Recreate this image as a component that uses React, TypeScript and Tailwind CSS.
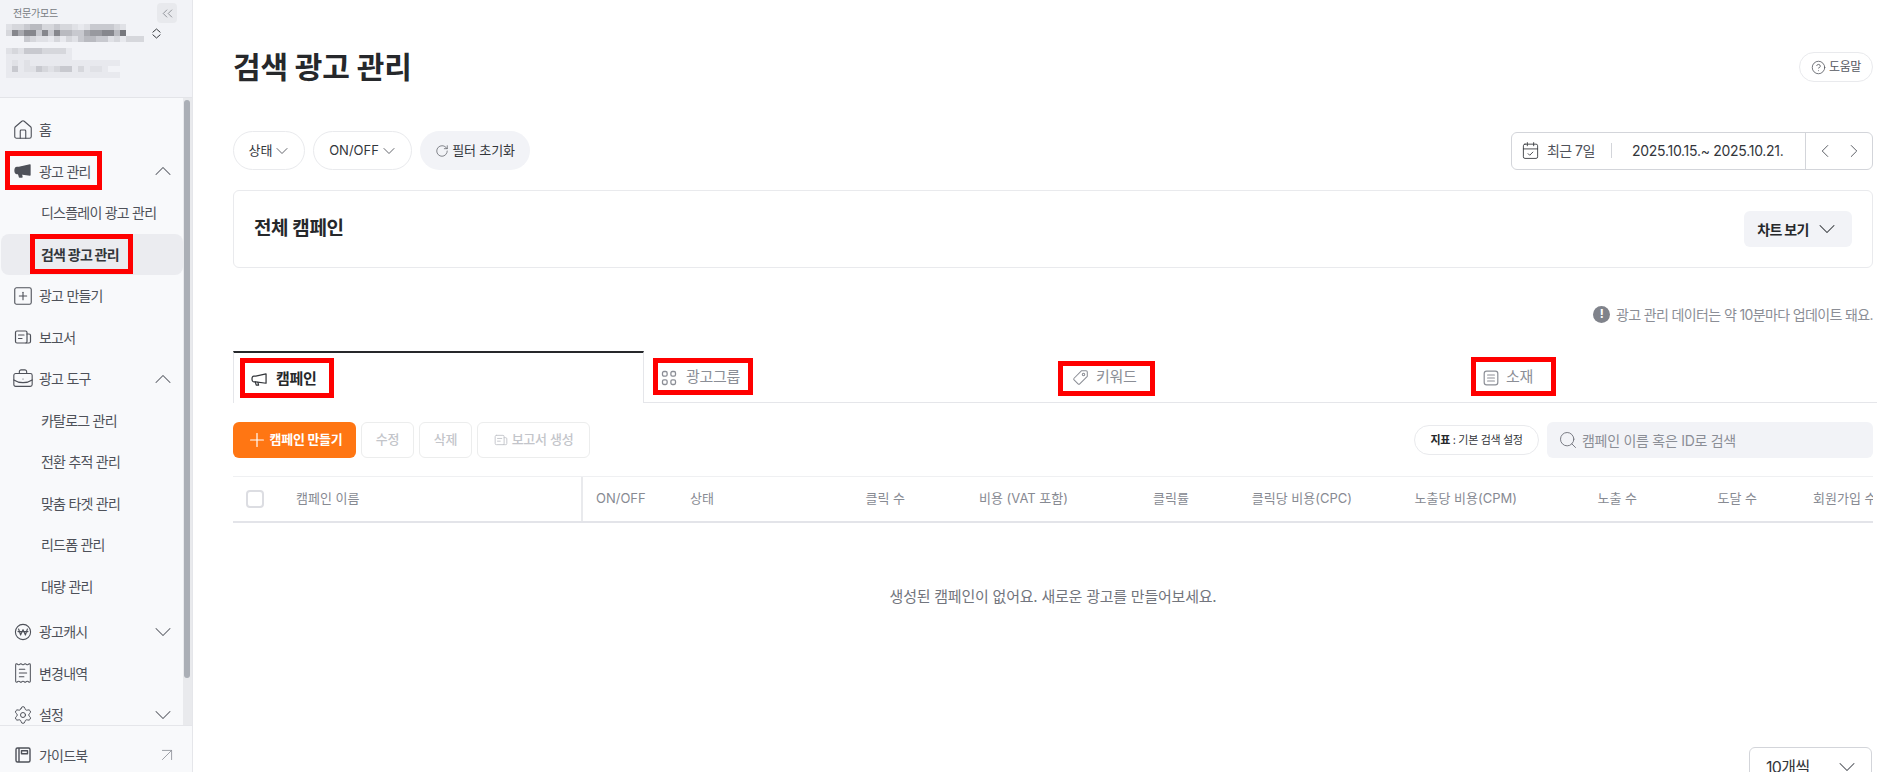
import React from "react";
import {
  House, SquarePlus, BriefcaseBusiness, ChevronUp, ChevronDown, ChevronLeft, ChevronRight, ChevronsLeft,
  ReceiptText, Settings, ArrowUpRight, RotateCw, CalendarCheck, CircleHelp, Search, Plus,
} from "lucide-react";

const FONT = "font-['Inter','Noto_Sans_CJK_KR',sans-serif]";

const Mega = ({ filled = false, className = "" }: { filled?: boolean; className?: string }) => (
  <svg viewBox="0 0 18 16" className={className} fill={filled ? "currentColor" : "none"} stroke="currentColor" strokeWidth="1.3" strokeLinejoin="round" strokeLinecap="round">
    <path d="M16 2 L16 12 L5 10.5 L3 10.5 C1.6 10.5 1 9.2 1 7.5 C1 5.8 1.6 4.3 3 4.3 L5 4.3 Z" />
    <path d="M4.5 10.5 L5.5 14 L8 14 L7.3 11" />
  </svg>
);

const Report = ({ className = "" }: { className?: string }) => (
  <svg viewBox="0 0 18 18" className={className} fill="none" stroke="currentColor" strokeWidth="1.2" strokeLinecap="round" strokeLinejoin="round">
    <rect x="1.5" y="3" width="11.5" height="12" rx="1.5" />
    <path d="M13 6 H15 a1.5 1.5 0 0 1 1.5 1.5 V13.5 a1.5 1.5 0 0 1 -1.5 1.5 H12" />
    <path d="M4.5 7 H10 M4.5 10.5 H8" />
  </svg>
);

const WonCircle = ({ className = "" }: { className?: string }) => (
  <svg viewBox="0 0 18 18" className={className} fill="none" stroke="currentColor" strokeLinecap="round" strokeLinejoin="round">
    <circle cx="9" cy="9" r="7.6" strokeWidth="1.1" />
    <path d="M4.6 6 L6.6 12 L9 6.6 L11.4 12 L13.4 6 M4 8.6 H14" strokeWidth="1.1" />
  </svg>
);

const Book = ({ className = "" }: { className?: string }) => (
  <svg viewBox="0 0 18 18" className={className} fill="none" stroke="currentColor" strokeWidth="1.4" strokeLinejoin="round">
    <rect x="2" y="2" width="14" height="14" rx="1.5" />
    <path d="M5 2 V16" />
    <rect x="7.5" y="4.8" width="6" height="3" />
  </svg>
);

const Grid4 = ({ className = "" }: { className?: string }) => (
  <svg viewBox="0 0 16 16" className={className} fill="none" stroke="currentColor" strokeWidth="1.3">
    <rect x="1.5" y="1.5" width="4.6" height="4.6" rx="1.4" />
    <rect x="9.9" y="1.5" width="4.6" height="4.6" rx="1.4" />
    <rect x="1.5" y="9.9" width="4.6" height="4.6" rx="1.4" />
    <rect x="9.9" y="9.9" width="4.6" height="4.6" rx="1.4" />
  </svg>
);

const DocLines = ({ className = "" }: { className?: string }) => (
  <svg viewBox="0 0 16 16" className={className} fill="none" stroke="currentColor" strokeWidth="1.2" strokeLinecap="round">
    <rect x="1.2" y="1.2" width="13.6" height="13.6" rx="2.4" />
    <path d="M4.6 5 H11.4 M4.6 8 H11.4 M4.6 11 H11.4" />
  </svg>
);

const DiagTag = ({ className = "" }: { className?: string }) => (
  <svg viewBox="0 0 18 18" className={className} fill="none" stroke="currentColor" strokeWidth="1.1" strokeLinejoin="round">
    <path d="M10.2 1.8 L14.8 1.8 Q16.2 1.8 16.2 3.2 L16.2 7.8 L8.2 15.8 Q7.3 16.7 6.4 15.8 L2.2 11.6 Q1.3 10.7 2.2 9.8 Z" />
    <circle cx="12.2" cy="5.8" r="1.3" />
  </svg>
);

const UpDown = ({ className = "" }: { className?: string }) => (
  <svg viewBox="0 0 10 12" className={className} fill="none" stroke="currentColor" strokeWidth="1.1" strokeLinecap="round" strokeLinejoin="round">
    <path d="M1 4.5 L5 1 L9 4.5 M1 7.5 L5 11 L9 7.5" />
  </svg>
);

/* The blurred account details: a mosaic of 6px blocks, one hex digit per block (0 = none). */
const MOSAIC: [number, string][] = [
  [0, "23345533433212444432"],
  [1, "38688484855446778859"],
  [2, "00043221313245544231333"],
  [4, "23244433331"],
  [5, "11111111111"],
  [6, "1212111111111111111"],
  [7, "14122432344131221"],
  [8, "1111111111111111111"],
];
const GRAY: Record<string, string> = {
  "1": "#e8e9ee", "2": "#e0e1e6", "3": "#d6d7dc", "4": "#c8c9cf", "5": "#b9bac0",
  "6": "#a8a9af", "7": "#98999f", "8": "#86878d", "9": "#77787e",
};
const Mosaic = () => (
  <svg width="138" height="54" viewBox="0 0 138 54" className="block">
    {MOSAIC.map(([r, s]) =>
      s.split("").map((c, i) =>
        GRAY[c] ? <rect key={`${r}-${i}`} x={i * 6} y={r * 6} width="6" height="6" fill={GRAY[c]} /> : null
      )
    )}
  </svg>
);

type NavItem = { label: string; icon?: React.ReactNode; chev?: "up" | "down"; sub?: boolean; active?: boolean };

const ic = "w-[18px] h-[18px] shrink-0";
const lu = "w-[22px] h-[22px] -mx-[2px] shrink-0";
const NAV: NavItem[] = [
  { label: "홈", icon: <House className={lu} strokeWidth={1.2} /> },
  { label: "광고 관리", icon: <Mega filled className={ic} />, chev: "up" },
  { label: "디스플레이 광고 관리", sub: true },
  { label: "검색 광고 관리", sub: true, active: true },
  { label: "광고 만들기", icon: <SquarePlus className={lu} strokeWidth={1.2} /> },
  { label: "보고서", icon: <Report className={ic} /> },
  { label: "광고 도구", icon: <BriefcaseBusiness className={lu} strokeWidth={1.2} />, chev: "up" },
  { label: "카탈로그 관리", sub: true },
  { label: "전환 추적 관리", sub: true },
  { label: "맞춤 타겟 관리", sub: true },
  { label: "리드폼 관리", sub: true },
  { label: "대량 관리", sub: true },
];
const NAV2: NavItem[] = [
  { label: "광고캐시", icon: <WonCircle className={ic} />, chev: "down" },
  { label: "변경내역", icon: <ReceiptText className={lu} strokeWidth={1.1} /> },
  { label: "설정", icon: <Settings className="w-[20px] h-[20px] -mx-px shrink-0" strokeWidth={1.2} />, chev: "down" },
];

const Row = ({ item }: { item: NavItem }) => (
  <div
    className={`flex items-center h-[41.5px] shrink-0 rounded-lg tracking-[-0.055em] text-[14px] ${
      item.active ? "bg-[#ebecf0] font-bold text-[#33363b] ml-px" : "text-[#4e5159]"
    } ${item.sub ? (item.active ? "pl-[40px]" : "pl-[41px]") : "pl-[14px]"}`}
  >
    {item.icon}
    {!item.sub && <span className="w-[7px]" />}
    <span className="flex-1 whitespace-nowrap">{item.label}</span>
    {item.chev === "up" && <ChevronUp className="w-[28px] h-[28px] mr-[6px] text-[#5b5e66]" strokeWidth={0.9} />}
    {item.chev === "down" && <ChevronDown className="w-[28px] h-[28px] mr-[6px] text-[#5b5e66]" strokeWidth={0.9} />}
  </div>
);

const Sidebar = () => (
  <aside className="w-[193px] shrink-0 h-full flex flex-col border-r border-[#e5e6ea] bg-[#f8f9fb]">
    <div className="h-[98px] shrink-0 bg-[#f2f3f7] border-b border-[#e3e4e8] flex">
      <div className="w-[151px] shrink-0 pl-[6px] pt-[7px]">
        <div className="pl-[7px] text-[10px] leading-[12px] text-[#777a82] tracking-[-0.02em]">전문가모드</div>
        <div className="mt-[5px]">
          <Mosaic />
        </div>
      </div>
      <div className="flex flex-col pt-[3px]">
        <div className="ml-[6px] w-[20px] h-[20px] rounded bg-[#e8e9ed] flex items-center justify-center text-[#6e7179]">
          <ChevronsLeft className="w-[17px] h-[17px]" strokeWidth={1} />
        </div>
        <UpDown className="ml-px w-[9px] h-[11px] mt-[5px] text-[#33363b]" />
      </div>
    </div>
    <div className="flex-1 flex min-h-0">
      <div className="w-[183px] pt-[11px] h-[627px] overflow-hidden flex flex-col">
        {NAV.map((n) => <Row key={n.label} item={n} />)}
        <div className="h-[4px] shrink-0" />
        {NAV2.map((n) => <Row key={n.label} item={n} />)}
      </div>
      <div className="w-[9px] h-[627px] bg-[#e9eaed] pt-[2px] pl-px pr-[2px]">
        <div className="h-[578px] rounded-full bg-[#abafb6]" />
      </div>
    </div>
    <div className="h-[47px] shrink-0 border-t border-[#e5e6ea] flex items-center pt-[12px] pl-[14px] pr-[14px] text-[14px] tracking-[-0.055em] text-[#4e5159]">
      <Book className={ic} />
      <span className="ml-[7px] flex-1">가이드북</span>
      <ArrowUpRight className="w-[22px] h-[22px] text-[#8b8e96]" strokeWidth={0.9} />
    </div>
  </aside>
);

const Pill = ({ children, className = "" }: { children: React.ReactNode; className?: string }) => (
  <div className={`h-[39px] rounded-full flex items-center justify-center text-[13px] text-[#33363b] ${className}`}>{children}</div>
);

const Tab = ({ icon, label, active = false, gap = "gap-[7px]" }: { icon: React.ReactNode; label: string; active?: boolean; gap?: string }) => (
  <div
    className={`w-[411px] h-[52px] shrink-0 flex items-center ${gap} pl-[17px] ${
      active
        ? "border-t-2 border-t-[#26282b] border-l border-r border-[#e5e6ea] font-bold text-[#26282b] pt-[2px]"
        : "border-b border-[#e5e6ea] text-[#8b8e96] pt-[2px]"
    } text-[15px] tracking-[-0.02em]`}
  >
    {icon}
    <span>{label}</span>
  </div>
);

const Ghost = ({ children, w }: { children: React.ReactNode; w: string }) => (
  <div className={`${w} h-[36px] rounded-md border border-[#eceded] flex items-center justify-center gap-[4px] text-[13px] font-medium text-[#c3c5ca] tracking-[-0.02em]`}>{children}</div>
);

const Th = ({ w, children, left = false }: { w: string; children: React.ReactNode; left?: boolean }) => (
  <div className={`${w} shrink-0 whitespace-nowrap ${left ? "text-left" : "text-right"}`}>{children}</div>
);

const Main = () => (
  <main className="flex-1 min-w-0 h-full pl-[40px] pr-[8px] pt-[52px] flex flex-col bg-white [&>*]:shrink-0">
    <div className="h-[30px] flex items-center justify-between">
      <h1 className="text-[30px] font-bold text-[#26282b] tracking-[-0.005em] leading-[30px]">검색 광고 관리</h1>
      <div className="w-[74px] h-[30px] rounded-full border border-[#e9eaed] flex items-center justify-center gap-[3px] text-[12px] text-[#55585f]">
        <CircleHelp className="w-[15px] h-[15px]" strokeWidth={1.3} />
        <span className="tracking-[-0.03em]">도움말</span>
      </div>
    </div>

    <div className="mt-[49px] h-[39px] flex items-center justify-between">
      <div className="flex gap-[8px]">
        <Pill className="w-[72px] border border-[#e9eaed] pl-[3px]">
          <span>상태</span>
          <ChevronDown className="w-[20px] h-[20px] text-[#55585f]" strokeWidth={1.1} />
        </Pill>
        <Pill className="w-[99px] border border-[#e9eaed] pl-[3px]">
          <span>ON/OFF</span>
          <ChevronDown className="w-[20px] h-[20px] text-[#55585f]" strokeWidth={1.1} />
        </Pill>
        <Pill className="w-[110px] bg-[#f2f3f7] gap-[3px]">
          <RotateCw className="w-[14px] h-[14px] text-[#55585f]" strokeWidth={1.2} />
          <span className="tracking-[-0.01em]">필터 초기화</span>
        </Pill>
      </div>
      <div className="w-[362px] h-[38px] rounded-md border border-[#d3d5da] flex items-center text-[14px] text-[#33363b]">
        <CalendarCheck className="ml-[9px] w-[19px] h-[19px]" strokeWidth={1.1} />
        <span className="ml-[7px] w-[48px] tracking-[-0.04em] whitespace-nowrap text-[#4e5159]">최근 7일</span>
        <span className="ml-[16px] w-px h-[15px] bg-[#d3d5da]" />
        <span className="ml-[20px] w-[173px] tracking-[-0.02em] whitespace-nowrap">2025.10.15.~ 2025.10.21.</span>
        <span className="w-px h-full bg-[#d3d5da]" />
        <div className="flex-1 flex items-center justify-around px-[4px] text-[#4e5159]">
          <ChevronLeft className="w-[22px] h-[22px]" strokeWidth={1} />
          <ChevronRight className="w-[22px] h-[22px]" strokeWidth={1} />
        </div>
      </div>
    </div>

    <div className="mt-[20px] h-[78px] rounded-md border border-[#e9eaed] flex items-center justify-between pl-[20px] pr-[20px]">
      <span className="text-[19px] font-bold text-[#26282b] tracking-[-0.02em]">전체 캠페인</span>
      <div className="w-[108px] h-[36px] rounded-md bg-[#f2f3f7] flex items-center justify-center pl-[2px] gap-[4px] text-[14px] font-bold text-[#26282b] tracking-[-0.05em]">
        <span>차트 보기</span>
        <ChevronDown className="w-[28px] h-[28px] text-[#33363b]" strokeWidth={0.9} />
      </div>
    </div>

    <div className="mt-[37px] h-[18px] flex items-center justify-end gap-[6px] text-[14px] text-[#8b8e96] tracking-[-0.045em]">
      <span className="w-[17px] h-[17px] rounded-full bg-[#80838b] text-white text-[12px] font-bold flex items-center justify-center">!</span>
      <span>광고 관리 데이터는 약 10분마다 업데이트 돼요.</span>
    </div>

    <div className="mt-[28px] flex">
      <Tab active gap="gap-[8px]" label="캠페인" icon={<Mega className="w-[17px] h-[15px] shrink-0 text-[#33363b]" />} />
      <Tab gap="gap-[9px]" label="광고그룹" icon={<Grid4 className="w-[16px] h-[16px] shrink-0" />} />
      <Tab label="키워드" icon={<DiagTag className="w-[17px] h-[17px] shrink-0" />} />
      <Tab label="소재" icon={<DocLines className="w-[16px] h-[16px] shrink-0" />} />
      <div className="flex-1 border-b border-[#e5e6ea]" />
    </div>

    <div className="mt-[19px] h-[36px] flex items-center">
      <div className="w-[123px] h-[36px] rounded-md bg-[#ff7613] text-white flex items-center justify-center gap-px text-[13px] font-bold tracking-[-0.02em]">
        <Plus className="w-[22px] h-[22px]" strokeWidth={1.3} />
        <span>캠페인 만들기</span>
      </div>
      <div className="flex gap-[5px] ml-[5px]">
        <Ghost w="w-[53px]">수정</Ghost>
        <Ghost w="w-[53px]">삭제</Ghost>
        <Ghost w="w-[113px]">
          <Report className="w-[14px] h-[14px]" />
          <span>보고서 생성</span>
        </Ghost>
      </div>
      <div className="flex-1" />
      <div className="w-[125px] h-[30px] rounded-full border border-[#e9eaed] flex items-center justify-center text-[11px] text-[#33363b] tracking-[-0.03em] whitespace-nowrap">
        <b className="text-[#26282b]">지표</b>&nbsp;: 기본 검색 설정
      </div>
      <div className="ml-[8px] w-[326px] h-[36px] rounded-md bg-[#f2f3f7] flex items-center pl-[11px] gap-[4px] text-[14px] text-[#8b8e96] tracking-[-0.02em]">
        <Search className="w-[20px] h-[20px] text-[#6e7179]" strokeWidth={1.1} />
        <span>캠페인 이름 혹은 ID로 검색</span>
      </div>
    </div>

    <div className="mt-[18px] h-[47px] border-t border-t-[#eff0f2] border-b-2 border-b-[#e3e4e9] flex items-center overflow-hidden text-[13px] text-[#878a92]">
      <div className="w-[350px] shrink-0 h-full border-r-2 border-r-[#e9eaed] flex items-center pl-[13px]">
        <span className="w-[18px] h-[18px] rounded border-2 border-[#dcdde2] bg-white" />
        <span className="ml-[32px]">캠페인 이름</span>
      </div>
      <Th left w="w-[93px] pl-[13px]">ON/OFF</Th>
      <Th left w="w-[100px] pl-[14px]">상태</Th>
      <Th w="w-[129px]">클릭 수</Th>
      <Th w="w-[163px]">비용 (VAT 포함)</Th>
      <Th w="w-[121px]">클릭률</Th>
      <Th w="w-[163px]">클릭당 비용(CPC)</Th>
      <Th w="w-[165px]">노출당 비용(CPM)</Th>
      <Th w="w-[120px]">노출 수</Th>
      <Th w="w-[120px]">도달 수</Th>
      <Th left w="w-[140px] pl-[56px]">회원가입 수</Th>
    </div>

    <div className="h-[148px] flex items-center justify-center text-[15px] text-[#72757d] tracking-[-0.015em]">
      생성된 캠페인이 없어요. 새로운 광고를 만들어보세요.
    </div>

    <div className="mt-[76px] self-end mr-px w-[123px] h-[40px] rounded-md border border-[#d3d5da] flex items-center justify-between pl-[16px] pr-[10px] text-[16px] text-[#33363b]">
      <span className="tracking-[-0.04em]">10개씩</span>
      <ChevronDown className="w-[28px] h-[28px] text-[#4e5159]" strokeWidth={0.9} />
    </div>
  </main>
);

const BOXES = [
  "left-[5px] top-[151px] w-[97px] h-[39px]",
  "left-[30px] top-[234px] w-[103px] h-[40px]",
  "left-[240px] top-[358px] w-[94px] h-[40px]",
  "left-[653px] top-[358px] w-[100px] h-[37px]",
  "left-[1058px] top-[361px] w-[97px] h-[35px]",
  "left-[1471px] top-[357px] w-[85px] h-[39px]",
];

export default function App() {
  return (
    <div className={`relative w-[1881px] h-[772px] overflow-hidden flex bg-white ${FONT}`}>
      <Sidebar />
      <Main />
      {BOXES.map((b) => (
        <div key={b} className={`absolute border-[5px] border-[#ff0000] ${b}`} />
      ))}
    </div>
  );
}
